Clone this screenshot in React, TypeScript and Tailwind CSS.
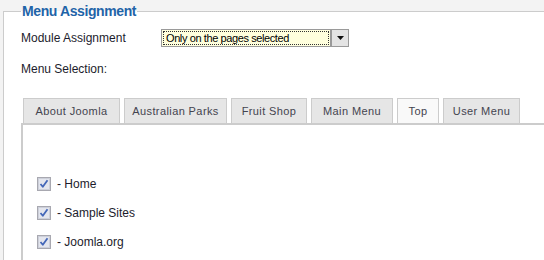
import React from 'react';

const tabs = [
    { label: 'About Joomla', width: 'w-[97px]' },
    { label: 'Australian Parks', width: 'w-[103px]' },
    { label: 'Fruit Shop', width: 'w-[76px]' },
    { label: 'Main Menu', width: 'w-[82px]' },
    { label: 'Top', width: 'w-[42px]', active: true },
    { label: 'User Menu', width: 'w-[77px]' },
];

const items = ['Home', 'Sample Sites', 'Joomla.org'];

const CheckedBox: React.FC = () => (
    <svg width="14" height="14" viewBox="0 0 14 14" className="shrink-0">
        <rect x="0.5" y="0.5" width="13" height="13" fill="#dcdce4" stroke="#a8a8b0" />
        <rect x="1.5" y="1.5" width="11" height="11" fill="#e4e6ee" stroke="#cdd0da" />
        <path d="M3.5 7 L5.8 9.8 L10.5 3.2" fill="none" stroke="#4467b8" strokeWidth="1.8" strokeLinejoin="round" />
    </svg>
);

const App: React.FC = () => {
    return (
        <div className="w-[544px] h-[260px] overflow-hidden bg-[#f3f3f3] pl-[3px] pt-[3px] font-['Liberation_Sans',Arial,sans-serif] text-[12px] text-[#1c1c2c]">
            <fieldset className="w-[600px] h-[300px] border border-[#cccccc] bg-white pl-[17px] pt-0 m-0">
                <legend className="px-[1px] text-[14px] font-bold text-[#1f64a8] leading-[16px] tracking-[-0.4px]">Menu Assignment</legend>

                <div className="flex items-center h-[18px] mt-[10px]">
                    <div className="w-[140px]">Module Assignment</div>
                    <div className="flex items-center h-[18px]">
                        <div className="w-[170px] h-[18px] bg-[#ffffdd] border border-[#9a9a9a] p-[1px]">
                            <div className="h-full border border-dotted border-[#333] flex items-center pl-[2px] text-[11px] tracking-[-0.4px] text-black leading-none">
                                Only on the pages selected
                            </div>
                        </div>
                        <div className="w-[18px] h-[18px] border border-[#9a9a9a] bg-[#e4e4e4] flex items-center justify-center">
                            <svg width="7" height="4" viewBox="0 0 7 4"><path d="M0 0 H7 L3.5 4 Z" fill="#111" /></svg>
                        </div>
                    </div>
                </div>

                <div className="mt-[15px] h-[14px] leading-[14px]">Menu Selection:</div>

                <div className="mt-[22px] flex gap-[4px] pl-[2px]">
                    {tabs.map(t => (
                        <div
                            key={t.label}
                            className={`${t.width} h-[25px] border border-b-0 border-[#cccccc] flex items-center justify-center text-[11px] tracking-[0.4px] text-[#44444f] ${t.active ? 'bg-[#f9f9f9]' : 'bg-[#e6e6e6]'}`}
                        >
                            {t.label}
                        </div>
                    ))}
                </div>
                <div className="border-t-2 border-l-2 border-[#cccccc] h-[200px] pl-[14px] pt-[52px] flex flex-col gap-[15px]">
                    {items.map(i => (
                        <div key={i} className="flex items-center gap-[6px] h-[14px]">
                            <CheckedBox />
                            <span>- {i}</span>
                        </div>
                    ))}
                </div>
            </fieldset>
        </div>
    );
};

export default App;
